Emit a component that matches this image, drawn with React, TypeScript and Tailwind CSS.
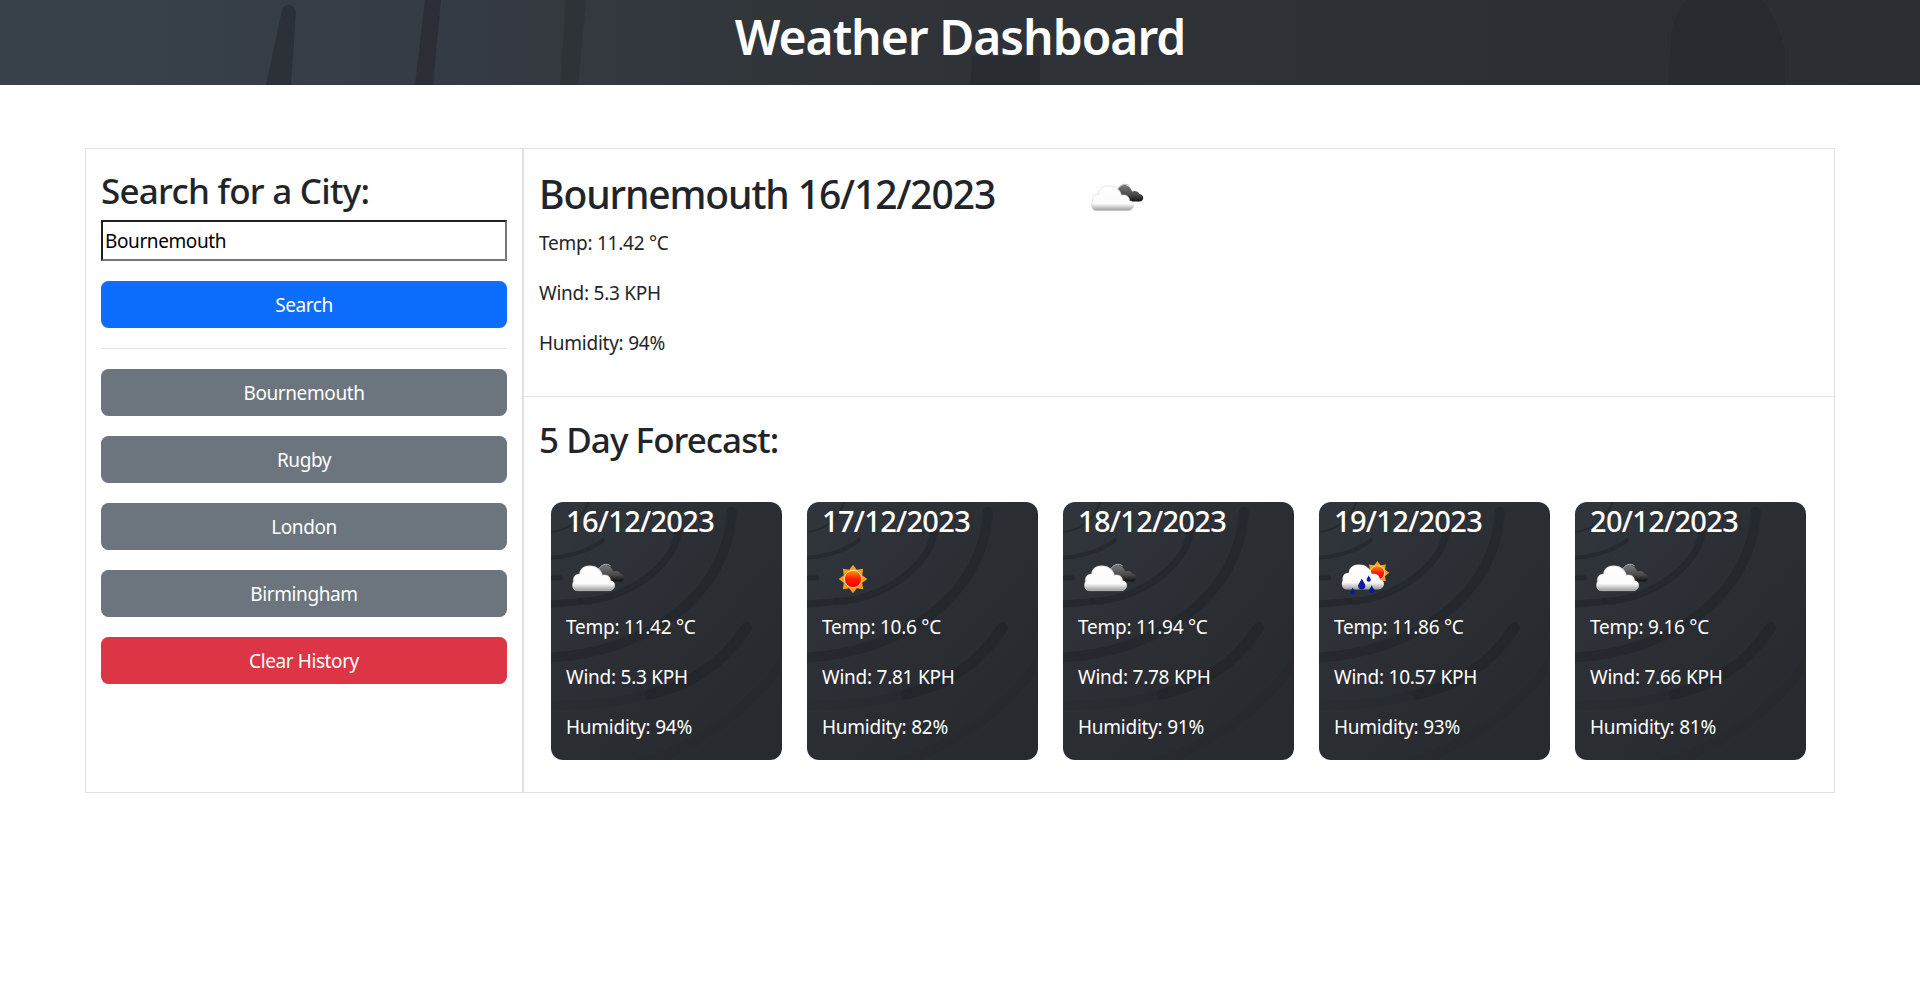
const cities = ["Bournemouth", "Rugby", "London", "Birmingham"];

const forecast = [
  { date: "16/12/2023", icon: "clouds", temp: "11.42", wind: "5.3", humidity: "94" },
  { date: "17/12/2023", icon: "sun", temp: "10.6", wind: "7.81", humidity: "82" },
  { date: "18/12/2023", icon: "clouds", temp: "11.94", wind: "7.78", humidity: "91" },
  { date: "19/12/2023", icon: "rain", temp: "11.86", wind: "10.57", humidity: "93" },
  { date: "20/12/2023", icon: "clouds", temp: "9.16", wind: "7.66", humidity: "81" },
];

const CLOUD = "M9 34.4 H35 C40 34.4 41 27 36 26.5 C36 23 33 21 29.5 22 C28 17 24 14.4 19 14.4 C14.5 14.4 11 17 11 21 C7 21 5.6 24 6 27 C4.5 30 5.5 34.4 9 34.4 Z";

function Defs() {
  return (
    <defs>
      <linearGradient id="white-cloud" x1="0" y1="0" x2="0" y2="1">
        <stop offset="0" stopColor="#ffffff" />
        <stop offset="0.72" stopColor="#fbfbfb" />
        <stop offset="1" stopColor="#9a9a9a" />
      </linearGradient>
      <linearGradient id="dark-cloud" x1="0" y1="0" x2="0" y2="1">
        <stop offset="0" stopColor="#7a7a7a" />
        <stop offset="0.6" stopColor="#4a4a4a" />
        <stop offset="1" stopColor="#111111" />
      </linearGradient>
      <linearGradient id="sun-disc" x1="0" y1="0" x2="0" y2="1">
        <stop offset="0" stopColor="#ff9a00" />
        <stop offset="0.5" stopColor="#ff1a00" />
        <stop offset="1" stopColor="#f00000" />
      </linearGradient>
    </defs>
  );
}

function Sun({ cx, cy, r }: { cx: number; cy: number; r: number }) {
  const points: string[] = [];
  for (let i = 0; i < 16; i++) {
    const a = (i * Math.PI) / 8;
    const rad = i % 2 === 0 ? r * 1.65 : r * 1.15;
    points.push(`${cx + rad * Math.cos(a)},${cy + rad * Math.sin(a)}`);
  }
  return (
    <g>
      <polygon points={points.join(" ")} fill="#f7a01e" />
      <circle cx={cx} cy={cy} r={r} fill="url(#sun-disc)" stroke="#ffe2b0" strokeWidth="0.8" />
    </g>
  );
}

function Drop({ x, y, s }: { x: number; y: number; s: number }) {
  return <path d={`M${x} ${y - s * 1.7} C${x + s * 0.4} ${y - s * 0.7} ${x + s} ${y - s * 0.3} ${x + s} ${y + s * 0.3} A${s} ${s} 0 0 1 ${x - s} ${y + s * 0.3} C${x - s} ${y - s * 0.3} ${x - s * 0.4} ${y - s * 0.7} ${x} ${y - s * 1.7} Z`} fill="#0a1a9c" />;
}

function WeatherIcon({ type, className }: { type: string; className: string }) {
  return (
    <svg viewBox="0 0 50 50" className={className}>
      <Defs />
      {type === "clouds" && (
        <g>
          <path d="M31 27 H44 C48 27 48 21.5 44 21 C43 18.5 40 18 38 19 C36 12 28 12 26 18 C25 21 28 27 31 27 Z" fill="url(#dark-cloud)" />
          <path d="M26 18 C28 13 33 12 36 14.5" fill="none" stroke="#b5b5b5" strokeWidth="0.8" />
          <path d={CLOUD} fill="url(#white-cloud)" stroke="#d4d4d4" strokeWidth="0.5" />
        </g>
      )}
      {type === "sun" && <Sun cx={25} cy={25} r={7} />}
      {type === "rain" && (
        <g>
          <Sun cx={35} cy={20} r={5.8} />
          <path d={CLOUD} fill="url(#white-cloud)" transform="translate(1 -1)" />
          <Drop x={15} y={35} s={1.9} />
          <Drop x={22.4} y={29.6} s={2.9} />
          <Drop x={28} y={25} s={1.7} />
          <Drop x={30.4} y={33.6} s={2.1} />
        </g>
      )}
    </svg>
  );
}

// swirl texture behind a forecast card
function CardSwirl() {
  return (
    <svg viewBox="0 0 231 259" className="absolute inset-0 h-full w-full" fill="none" strokeLinecap="round">
      <g stroke="#22252a">
        <path d="M181 10 C178 90 100 150 0 156" strokeWidth="10" opacity="0.6" />
        <path d="M127 31 C120 70 70 98 29 100" strokeWidth="7" opacity="0.7" />
        <path d="M29 100 L-5 103" strokeWidth="7" opacity="0.7" />
        <path d="M52 38 C40 48 20 55 -2 56" strokeWidth="4" opacity="0.6" />
        <path d="M-2 76 L9 76" strokeWidth="5" opacity="0.8" />
        <path d="M38 -2 C30 20 15 29 -2 30" strokeWidth="2" opacity="0.7" />
        <path d="M196 126 C170 165 135 185 99 193" strokeWidth="11" opacity="0.75" />
        <path d="M99 193 C65 202 30 205 -5 204" strokeWidth="9" opacity="0.25" />
        <path d="M240 148 C205 205 150 245 90 262" strokeWidth="9" opacity="0.25" />
      </g>
    </svg>
  );
}

function HeaderSwirl() {
  return (
    <svg viewBox="0 0 1920 85" className="absolute inset-0 h-full w-full" preserveAspectRatio="none" fill="none">
      <g fill="#24272b">
        <path d="M282 10 C284 3 294 3 296 12 L291 85 H266 Z" opacity="0.55" />
        <path d="M425 0 H441 L433 85 H415 Z" opacity="0.55" />
        <path d="M566 0 H586 L578 85 H560 Z" opacity="0.35" />
        <path d="M972 56 H1040 V85 H970 Z" opacity="0.5" />
        <path d="M1672 30 C1680 0 1690 -10 1730 -10 C1765 -10 1775 15 1785 50 V85 H1668 Z" opacity="0.5" />
      </g>
    </svg>
  );
}

function ActionButton({ label, color }: { label: string; color: string }) {
  return (
    <button className={`h-[47px] w-full rounded-[7.5px] pt-[2px] text-[19px] tracking-[-0.4px] text-white ${color}`}>
      {label}
    </button>
  );
}

export default function App() {
  return (
    <div className="min-h-screen bg-white font-['Noto_Sans',sans-serif] text-[#212529]">
      <header className="relative flex h-[85px] items-center justify-center overflow-hidden bg-gradient-to-r from-[#39424b] via-[#2f3337] to-[#2a2d31] pb-[12px]">
        <HeaderSwirl />
        <h1 className="relative text-[48px] leading-[60px] font-semibold tracking-[-1px] text-white">Weather Dashboard</h1>
      </header>

      <main className="px-[85px] pt-[63px] pb-[185px]">
        <div className="flex border border-[#dee2e6]">
          <aside className="w-[438px] shrink-0 border-r-2 border-[#dee2e6] px-[15px] pt-[21px]">
            <h3 className="mb-[8px] text-[35px] leading-[42px] font-medium tracking-[-0.75px]">Search for a City:</h3>
            <input
              readOnly
              value="Bournemouth"
              className="mb-[20px] block h-[41px] w-full border-2 border-t-[#1f1f1f] border-r-[#767676] border-b-[#767676] border-l-[#1f1f1f] px-[2px] text-[19px] tracking-[-0.4px] text-black outline-none"
            />
            <ActionButton label="Search" color="bg-[#0d6efd]" />
            <hr className="mt-[20px] mb-[20px] border-t border-[#dee2e6]" />
            <div className="flex flex-col gap-[20px]">
              {cities.map((city) => (
                <ActionButton key={city} label={city} color="bg-[#6c757d]" />
              ))}
              <ActionButton label="Clear History" color="bg-[#dc3545]" />
            </div>
          </aside>

          <section className="min-w-0 flex-1">
            <div className="h-[248px] border-b border-[#dee2e6] px-[15px] pt-[20px]">
              <div className="mb-[9px] flex h-[50px] items-center">
                <h2 className="w-[546px] text-[39px] leading-[48px] font-medium tracking-[-1.1px] whitespace-nowrap">Bournemouth 16/12/2023</h2>
                <WeatherIcon type="clouds" className="mt-[10px] h-[62px] w-[62px]" />
              </div>
              <p className="mb-[20px] text-[19px] leading-[30px] tracking-[-0.25px]">Temp: 11.42 °C</p>
              <p className="mb-[20px] text-[19px] leading-[30px] tracking-[-0.25px]">Wind: 5.3 KPH</p>
              <p className="text-[19px] leading-[30px] tracking-[-0.25px]">Humidity: 94%</p>
            </div>

            <div className="px-[15px] pt-[22px] pb-[32px]">
              <h3 className="mb-[41px] text-[35px] leading-[42px] font-medium tracking-[-0.95px]">5 Day Forecast:</h3>
              <div className="flex gap-[25px] pl-[12px]">
                {forecast.map((day) => (
                  <div key={day.date} className="relative h-[258px] w-[231px] overflow-hidden rounded-[12px] bg-gradient-to-br from-[#31363d] via-[#2a2e33] to-[#26292d] px-[15px] text-white">
                    <CardSwirl />
                    <div className="relative">
                      <h4 className="mb-[10px] pt-[1px] text-[29px] leading-[35px] font-medium tracking-[-0.7px]">{day.date}</h4>
                      <WeatherIcon type={day.icon} className="mb-[2px] h-[62px] w-[62px]" />
                      <p className="mb-[20px] text-[19px] leading-[30px] tracking-[-0.25px]">Temp: {day.temp} °C</p>
                      <p className="mb-[20px] text-[19px] leading-[30px] tracking-[-0.25px]">Wind: {day.wind} KPH</p>
                      <p className="text-[19px] leading-[30px] tracking-[-0.25px]">Humidity: {day.humidity}%</p>
                    </div>
                  </div>
                ))}
              </div>
            </div>
          </section>
        </div>
      </main>
    </div>
  );
}
